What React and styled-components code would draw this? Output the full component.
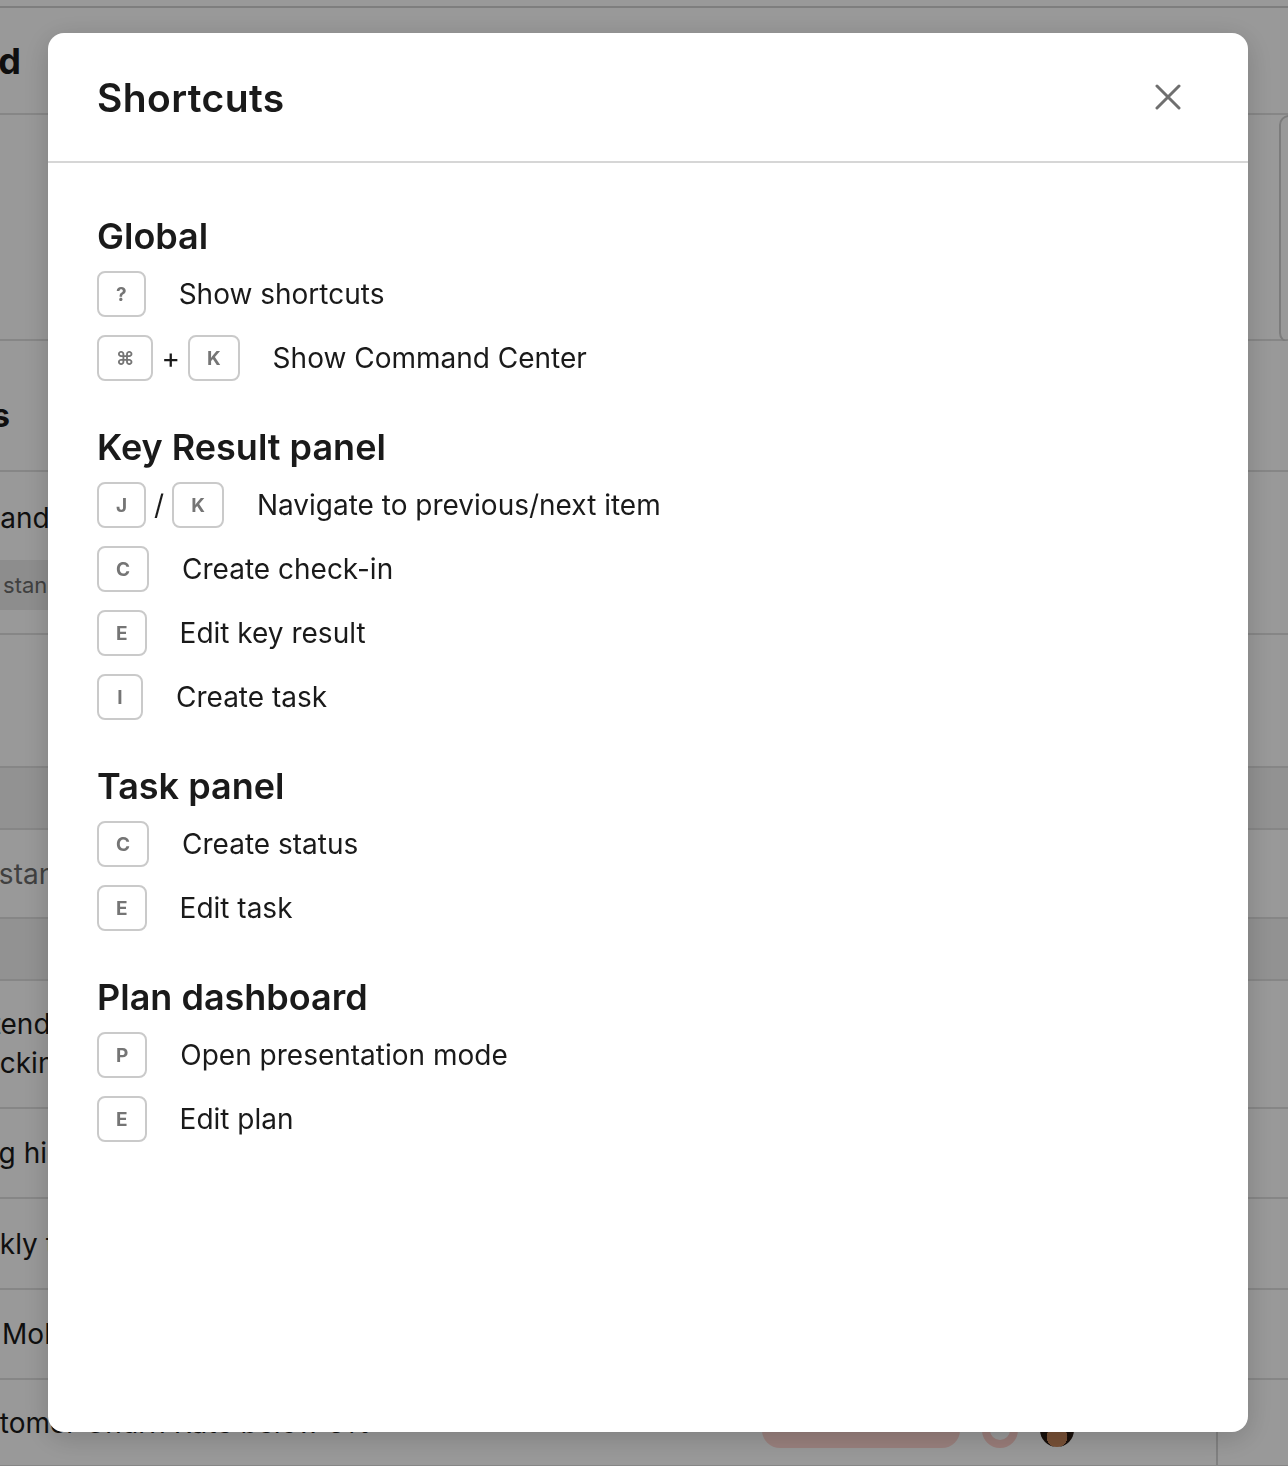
import React from "react";
import styled, { createGlobalStyle } from "styled-components";

const GlobalStyle = createGlobalStyle`
  html, body {
    margin: 0;
    padding: 0;
  }
  body {
    font-family: Inter, "Noto Sans", "DejaVu Sans", sans-serif;
    background: #ffffff;
    color: #1a1a1a;
  }
`;

/* ---------- page behind the dialog ---------- */

const Page = styled.div`
  position: relative;
  width: 1288px;
  height: 1466px;
  overflow: hidden;
  background: #ffffff;
`;

const TopBar = styled.div`
  height: 6px;
  border-bottom: 2px solid #d2d2d2;
`;

const BgRow = styled.div`
  height: ${(p) => p.$h}px;
  box-sizing: border-box;
  border-bottom: 2px solid #e0e0e0;
  background: ${(p) => (p.$band ? "#f3f3f3" : "#ffffff")};
  display: flex;
  flex-direction: column;
  justify-content: ${(p) => (p.$top ? "flex-start" : "center")};
  padding-top: ${(p) => p.$pt || 0}px;
  gap: ${(p) => p.$gap || 0}px;
  position: relative;
`;

const SplitRow = styled(BgRow)`
  flex-direction: row;
  align-items: center;
  justify-content: flex-start;
`;

const BgText = styled.div`
  margin-left: ${(p) => p.$shift || 0}px;
  font-size: ${(p) => p.$size || 28}px;
  font-weight: ${(p) => p.$weight || 400};
  color: ${(p) => (p.$muted ? "#6b6b6b" : "#1a1a1a")};
  line-height: ${(p) => p.$lh || 36}px;
  white-space: nowrap;
`;

const TailText = styled.div`
  width: ${(p) => p.$end}px;
  display: flex;
  justify-content: flex-end;
  font-size: ${(p) => p.$size}px;
  font-weight: 700;
  white-space: nowrap;
  color: #1a1a1a;
`;

const Chip = styled.div`
  align-self: flex-start;
  margin-left: ${(p) => p.$shift}px;
  height: 50px;
  padding: 0 14px;
  display: flex;
  align-items: center;
  background: #ececec;
  border-radius: 6px;
  font-size: 22px;
  color: #6b6b6b;
  white-space: pre;
`;

const SideCard = styled.div`
  position: absolute;
  left: 1279px;
  top: 0;
  width: 60px;
  height: 224px;
  border: 2px solid #cfcfcf;
  border-radius: 10px;
`;

const RowTail = styled.div`
  margin-left: auto;
  display: flex;
  align-items: center;
  gap: 22px;
  width: 526px;
  height: 100%;
`;

const Pill = styled.div`
  width: 198px;
  height: 36px;
  border-radius: 18px;
  background: #ffd6d1;
  margin-top: 14px;
`;

const Dot = styled.div`
  width: 36px;
  height: 36px;
  border-radius: 50%;
  border: 8px solid #ffd0cb;
  box-sizing: border-box;
  margin-top: 14px;
`;

const Avatar = styled.div`
  width: 34px;
  height: 34px;
  border-radius: 50%;
  background: radial-gradient(circle at 50% 70%, #c7865a 0 35%, #2a1a12 36% 100%);
  margin-top: 14px;
`;

const VLine = styled.div`
  margin-left: auto;
  align-self: stretch;
  width: 2px;
  background: #d6d6d6;
  margin-right: 70px;
`;

/* ---------- dialog ---------- */

const Overlay = styled.div`
  position: fixed;
  inset: 0;
  background: rgba(0, 0, 0, 0.4);
  padding: 33px 40px 34px 48px;
  display: flex;
`;

const Dialog = styled.div`
  flex: 1;
  background: #ffffff;
  border-radius: 16px;
  box-shadow: 0 6px 28px rgba(0, 0, 0, 0.18);
  display: flex;
  flex-direction: column;
  overflow: hidden;
`;

const Header = styled.div`
  height: 130px;
  flex-shrink: 0;
  box-sizing: border-box;
  padding: 0 67px 0 49px;
  display: flex;
  align-items: center;
  justify-content: space-between;
  border-bottom: 2px solid #d6d6d6;
`;

const Title = styled.h2`
  margin: 0;
  font-size: 39px;
  font-weight: 600;
  color: #1a1a1a;
  letter-spacing: 0.4px;
`;

const CloseButton = styled.button`
  border: none;
  background: none;
  padding: 0;
  width: 26px;
  height: 26px;
  display: flex;
  cursor: pointer;
`;

const Body = styled.div`
  padding: 55px 49px;
  display: flex;
  flex-direction: column;
  gap: 48px;
`;

const Section = styled.section`
  display: flex;
  flex-direction: column;
`;

const SectionTitle = styled.h3`
  margin: 0 0 17px;
  font-size: 36px;
  line-height: 36px;
  font-weight: 600;
  color: #1a1a1a;
`;

const List = styled.div`
  display: flex;
  flex-direction: column;
  gap: 18px;
`;

const Row = styled.div`
  display: flex;
  align-items: center;
  gap: 33px;
`;

const Keys = styled.div`
  display: flex;
  align-items: center;
  gap: 8px;
`;

const Key = styled.kbd`
  box-sizing: border-box;
  height: 46px;
  min-width: 46px;
  padding: 0 17px;
  display: inline-flex;
  align-items: center;
  justify-content: center;
  border: 2px solid #cacaca;
  border-radius: 8px;
  font-family: Inter, "DejaVu Sans", sans-serif;
  font-size: 19px;
  font-weight: 700;
  color: #757575;
`;

const Joiner = styled.span`
  font-size: 28px;
  color: #1a1a1a;
`;

const Label = styled.span`
  font-size: 28px;
  color: #1a1a1a;
`;

const sections = [
  {
    title: "Global",
    items: [
      { keys: ["?"], label: "Show shortcuts" },
      { keys: ["⌘", "K"], join: "+", label: "Show Command Center" },
    ],
  },
  {
    title: "Key Result panel",
    items: [
      { keys: ["J", "K"], join: "/", label: "Navigate to previous/next item" },
      { keys: ["C"], label: "Create check-in" },
      { keys: ["E"], label: "Edit key result" },
      { keys: ["I"], label: "Create task" },
    ],
  },
  {
    title: "Task panel",
    items: [
      { keys: ["C"], label: "Create status" },
      { keys: ["E"], label: "Edit task" },
    ],
  },
  {
    title: "Plan dashboard",
    items: [
      { keys: ["P"], label: "Open presentation mode" },
      { keys: ["E"], label: "Edit plan" },
    ],
  },
];

const CloseIcon = () => (
  <svg width="26" height="26" viewBox="0 0 26 26" fill="none">
    <path
      d="M2 2L24 24M24 2L2 24"
      stroke="#6f6f6f"
      strokeWidth="3"
      strokeLinecap="round"
    />
  </svg>
);

const Shortcut = ({ keys, join, label }) => (
  <Row>
    <Keys>
      {keys.map((k, i) => (
        <React.Fragment key={k + i}>
          {i > 0 && <Joiner>{join}</Joiner>}
          <Key>{k}</Key>
        </React.Fragment>
      ))}
    </Keys>
    <Label>{label}</Label>
  </Row>
);

const Background = () => (
  <Page>
    <TopBar />
    <BgRow $h={107}>
      <TailText $end={21} $size={36}>Plan dashboard</TailText>
    </BgRow>
    <BgRow $h={226}>
      <SideCard />
    </BgRow>
    <BgRow $h={131} $top $pt={55}>
      <TailText $end={10} $size={32}>Key results</TailText>
    </BgRow>
    <BgRow $h={163} $top $pt={28} $gap={24}>
      <BgText $shift={-27}>Standup notes shared weekly</BgText>
      <Chip $shift={-36}>In standup</Chip>
    </BgRow>
    <BgRow $h={133} />
    <BgRow $h={62} $band />
    <BgRow $h={89}>
      <BgText $shift={-48} $muted>Outstanding</BgText>
    </BgRow>
    <BgRow $h={62} $band />
    <BgRow $h={128}>
      <BgText $shift={-41} $lh={39}>Extend onboarding flow for</BgText>
      <BgText $shift={-43} $lh={39}>Tracking of new accounts</BgText>
    </BgRow>
    <BgRow $h={90}>
      <BgText $shift={-34}>Log highest NPS score</BgText>
    </BgRow>
    <BgRow $h={91}>
      <BgText $shift={-59}>Weekly team sync</BgText>
    </BgRow>
    <BgRow $h={90}>
      <BgText $shift={2}>MoM revenue growth</BgText>
    </BgRow>
    <SplitRow $h={87}>
      <BgText $shift={-52}>Customer Churn Rate below 5%</BgText>
      <RowTail>
        <Pill />
        <Dot />
        <Avatar />
        <VLine />
      </RowTail>
    </SplitRow>
  </Page>
);

export default function App() {
  return (
    <>
      <GlobalStyle />
      <Background />
      <Overlay>
        <Dialog role="dialog" aria-label="Shortcuts">
          <Header>
            <Title>Shortcuts</Title>
            <CloseButton aria-label="Close">
              <CloseIcon />
            </CloseButton>
          </Header>
          <Body>
            {sections.map((s) => (
              <Section key={s.title}>
                <SectionTitle>{s.title}</SectionTitle>
                <List>
                  {s.items.map((it) => (
                    <Shortcut key={it.label} {...it} />
                  ))}
                </List>
              </Section>
            ))}
          </Body>
        </Dialog>
      </Overlay>
    </>
  );
}
